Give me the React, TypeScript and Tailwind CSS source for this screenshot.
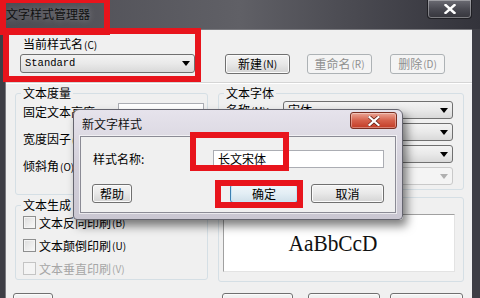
import type { ReactNode } from 'react';

type BtnProps = {
  children?: ReactNode;
  className?: string;
  disabled?: boolean;
  primary?: boolean;
};

function Btn({ children, className = '', disabled = false, primary = false }: BtnProps) {
  const look = disabled
    ? 'border-[#adb2b5] bg-[#f4f4f4] text-[#8f8f8f]'
    : primary
      ? 'border-[#3c7fb1] bg-gradient-to-b from-[#f0f6fa] via-[#e3eef5] to-[#cfe0ea] text-black shadow-[inset_0_0_0_1px_#c7e6f8]'
      : 'border-[#707070] bg-gradient-to-b from-[#f4f4f4] via-[#e8e8e8] to-[#d4d4d4] text-black shadow-[inset_0_0_0_1px_#fbfbfb]';
  return (
    <div className={`flex shrink-0 items-center justify-center rounded-[3px] border text-[12px] leading-[14px] ${look} ${className}`}>
      {children}
    </div>
  );
}

function Key({ k }: { k: string }) {
  return <span className="ml-[1px] text-[10px] leading-[14px]">({k})</span>;
}

function Combo({ text = '', className = '', disabled = false, mono = false }: { text?: string; className?: string; disabled?: boolean; mono?: boolean }) {
  return (
    <div
      className={`flex shrink-0 items-center justify-between rounded-[3px] border pl-[4px] pr-[4px] ${
        disabled ? 'border-[#c9c9c9] bg-[#f4f4f4]' : 'border-[#707070] bg-gradient-to-b from-[#f3f3f3] via-[#e9e9e9] to-[#d9d9d9]'
      } ${className}`}
    >
      <span className={mono ? "font-['Liberation_Mono',monospace] text-[10.5px] leading-none text-black" : 'text-[12px] leading-none text-black'}>{text}</span>
      <svg width="8" height="5" viewBox="0 0 8 5">
        <path d="M0 0H8L4 5Z" fill={disabled ? '#b0b0b0' : '#000'} />
      </svg>
    </div>
  );
}

function Check({ label, k, disabled = false }: { label: string; k: string; disabled?: boolean }) {
  return (
    <div className={`flex h-[15px] items-center pl-[7px] ${disabled ? 'text-[#a6a6a6]' : 'text-black'}`}>
      <div
        className={`h-[13px] w-[13px] border ${
          disabled ? 'border-[#c4c4c4] bg-[#f4f4f4]' : 'border-[#8e8f8f] bg-gradient-to-br from-[#dcdcdc] to-[#fafafa] shadow-[inset_0_0_0_1px_#f4f4f4]'
        }`}
      />
      <span className="ml-[3px] text-[12px] leading-[14px]">{label}</span>
      <Key k={k} />
    </div>
  );
}

function RedBox({ className }: { className: string }) {
  return <div className={`pointer-events-none absolute border-[6px] border-[#e8141c] ${className}`} />;
}

export default function App() {
  return (
    <div className="relative h-[298px] w-[480px] overflow-hidden bg-[#3e3e45] font-['Noto_Sans_CJK_SC','Liberation_Sans',sans-serif]">
      {/* title bar */}
      <div className="flex h-[29px] items-start bg-gradient-to-r from-[#4c4c53] via-[#606066] to-[#33333b]">
        <div className="pl-[6px] pt-[7px] text-[12px] leading-[14px] text-[#111] [text-shadow:0_0_6px_rgba(255,255,255,0.35)]">
          文字样式管理器
        </div>
        <div className="ml-auto mr-[8px] flex h-[19px] w-[45px] items-center justify-center rounded-b-[4px] border border-t-0 border-[#1f1f24] bg-gradient-to-b from-[#6c6c74] via-[#4a4a52] to-[#35353c] shadow-[inset_0_0_0_1px_rgba(255,255,255,0.35)]">
          <svg width="12" height="10" viewBox="0 0 12 10">
            <path d="M1.5 1L10.5 9M10.5 1L1.5 9" stroke="#fff" strokeWidth="2.4" strokeLinecap="square" />
          </svg>
        </div>
      </div>

      <div className="flex h-[269px]">
        <div className="w-[5px] shrink-0" />
        {/* dialog body */}
        <div className="w-[467px] shrink-0 border-t border-l border-[#7b7b80] bg-[#f0f0f0] text-black">
          <div className="pl-[17px] pt-[7px] text-[12px] leading-[14px]">
            当前样式名<Key k="C" />
          </div>
          <div className="mt-[2px] flex pl-[14px]">
            <Combo text="Standard" mono className="h-[19px] w-[175px]" />
            <Btn className="ml-[30px] h-[20px] w-[65px]">
              新建<Key k="N" />
            </Btn>
            <Btn disabled className="ml-[17px] h-[20px] w-[65px]">
              重命名<Key k="R" />
            </Btn>
            <Btn disabled className="ml-[18px] h-[20px] w-[55px]">
              删除<Key k="D" />
            </Btn>
          </div>
          <div className="mt-[8px] h-px bg-[#d5d5d5]" />
          <div className="h-px bg-white" />

          <div className="mt-[2px] flex pl-[9px]">
            {/* left column */}
            <div className="flex w-[193px] flex-col">
              <fieldset className="h-[109px] rounded-[3px] border border-[#d5dfe5]">
                <legend className="ml-[5px] px-[2px] text-[12px] leading-[14px]">文本度量</legend>
                <div className="flex flex-col gap-[9px] pt-[3px]">
                  <div className="flex h-[18px] items-center justify-between pl-[7px] pr-[3px]">
                    <span className="text-[12px] leading-[14px]">
                      固定文本高度<Key k="H" />
                    </span>
                    <div className="h-[18px] w-[86px] border border-[#abadb3] bg-white" />
                  </div>
                  <div className="flex h-[18px] items-center justify-between pl-[7px] pr-[3px]">
                    <span className="text-[12px] leading-[14px]">
                      宽度因子<Key k="W" />
                    </span>
                    <div className="h-[18px] w-[86px] border border-[#abadb3] bg-white" />
                  </div>
                  <div className="flex h-[18px] items-center justify-between pl-[7px] pr-[3px]">
                    <span className="text-[12px] leading-[14px]">
                      倾斜角<Key k="O" />
                    </span>
                    <div className="h-[18px] w-[86px] border border-[#abadb3] bg-white" />
                  </div>
                </div>
              </fieldset>
              <fieldset className="mt-[3px] h-[82px] rounded-[3px] border border-[#d5dfe5]">
                <legend className="ml-[5px] px-[2px] text-[12px] leading-[14px]">文本生成</legend>
                <div className="flex flex-col gap-[8px] pt-[3px]">
                  <Check label="文本反向印刷" k="B" />
                  <Check label="文本颠倒印刷" k="U" />
                  <Check label="文本垂直印刷" k="V" disabled />
                </div>
              </fieldset>
            </div>

            {/* right column */}
            <div className="ml-[10px] flex w-[246px] flex-col">
              <fieldset className="h-[104px] rounded-[3px] border border-[#d5dfe5]">
                <legend className="ml-[5px] px-[2px] text-[12px] leading-[14px]">文本字体</legend>
                <div className="flex flex-col gap-[4px] pt-[1px]">
                  <div className="flex h-[18px] items-center justify-between pl-[7px] pr-[10px]">
                    <span className="text-[12px] leading-[14px]">
                      名称<Key k="M" />:
                    </span>
                    <Combo text="宋体" className="h-[18px] w-[170px]" />
                  </div>
                  <div className="flex h-[18px] items-center justify-between pl-[7px] pr-[10px]">
                    <span className="text-[12px] leading-[14px]">
                      样式<Key k="Y" />:
                    </span>
                    <Combo text="常规" className="h-[18px] w-[170px]" />
                  </div>
                  <div className="flex h-[18px] items-center justify-between pl-[7px] pr-[10px]">
                    <span className="text-[12px] leading-[14px]">
                      语言<Key k="L" />:
                    </span>
                    <Combo text="CHINESE_GB2312" className="h-[18px] w-[170px]" />
                  </div>
                  <div className="flex h-[18px] items-center justify-between pl-[7px] pr-[10px] text-[#a6a6a6]">
                    <span className="text-[12px] leading-[14px]">
                      大字体<Key k="E" />:
                    </span>
                    <Combo disabled className="h-[18px] w-[170px]" />
                  </div>
                </div>
              </fieldset>
              <div className="mt-[7px] h-[85px] rounded-[3px] border border-[#d5dfe5] pb-[9px] pl-[4px] pr-[8px] pt-[16px]">
                <div className="flex h-full items-center justify-center border border-[#a0a0a0] border-b-[#e3e3e3] border-r-[#e3e3e3] bg-white pr-[12px]">
                  <span className="inline-block origin-center scale-x-[0.89] font-['Liberation_Serif',serif] text-[24px] leading-none text-[#111]">
                    AaBbCcD
                  </span>
                </div>
              </div>
            </div>
          </div>

          {/* bottom buttons */}
          <div className="mt-[11px] flex pl-[7px]">
            <Btn className="h-[22px] w-[40px]">说明</Btn>
            <Btn className="ml-[169px] h-[22px] w-[71px]">应用<Key k="A" /></Btn>
            <Btn className="ml-[15px] h-[22px] w-[72px]">关闭</Btn>
            <Btn className="ml-[10px] h-[22px] w-[73px]">帮助<Key k="H" /></Btn>
          </div>
        </div>
        <div className="w-[8px] shrink-0" />
      </div>

      {/* modal dialog */}
      <div className="absolute left-[73px] top-[109px] flex h-[111px] w-[330px] flex-col rounded-t-[6px] rounded-b-[4px] border border-[#65656f] bg-gradient-to-b from-[#e6e3ec] via-[#d3d0da] to-[#cac7d2] shadow-[4px_6px_10px_rgba(0,0,0,0.5)]">
        <div className="flex h-[26px] shrink-0 items-start">
          <div className="pl-[8px] pt-[7px] text-[12px] leading-[14px] text-[#111]">新文字样式</div>
          <div className="ml-auto mr-[5px] mt-[2px] flex h-[17px] w-[47px] items-center justify-center rounded-[3px] border border-[#7a2f22] bg-gradient-to-b from-[#eaa596] via-[#d5604b] to-[#c23a24] shadow-[inset_0_0_0_1px_rgba(255,255,255,0.35)]">
            <svg width="12" height="10" viewBox="0 0 12 10">
              <path d="M1.5 1L10.5 9M10.5 1L1.5 9" stroke="#5a1a10" strokeWidth="3.6" strokeLinecap="square" />
              <path d="M1.5 1L10.5 9M10.5 1L1.5 9" stroke="#fff" strokeWidth="2.2" strokeLinecap="square" />
            </svg>
          </div>
        </div>
        <div className="mx-[6px] h-[77px] border border-[#8b8b95] bg-[#f0f0f0] shadow-[0_0_0_1px_rgba(255,255,255,0.6)]">
          <div className="flex items-center pl-[12px] pr-[11px] pt-[13px]">
            <span className="text-[12px] leading-[14px] text-black">样式名称:</span>
            <div className="ml-auto flex h-[18px] w-[171px] items-center border border-[#abadb3] bg-white pl-[4px] text-[12px] leading-[14px] text-black">
              长文宋体
            </div>
          </div>
          <div className="mt-[16px] flex pl-[11px]">
            <Btn className="h-[19px] w-[40px]">帮助</Btn>
            <Btn primary className="ml-[98px] h-[19px] w-[68px]">确定</Btn>
            <Btn className="ml-[13px] h-[19px] w-[73px]">取消</Btn>
          </div>
        </div>
      </div>

      {/* red highlight boxes */}
      <RedBox className="left-[0px] top-[-3px] h-[38px] w-[110px]" />
      <RedBox className="left-[3px] top-[28px] h-[54px] w-[198px]" />
      <RedBox className="left-[190px] top-[132px] h-[39px] w-[99px]" />
      <RedBox className="left-[215px] top-[180px] h-[28px] w-[88px]" />
    </div>
  );
}
